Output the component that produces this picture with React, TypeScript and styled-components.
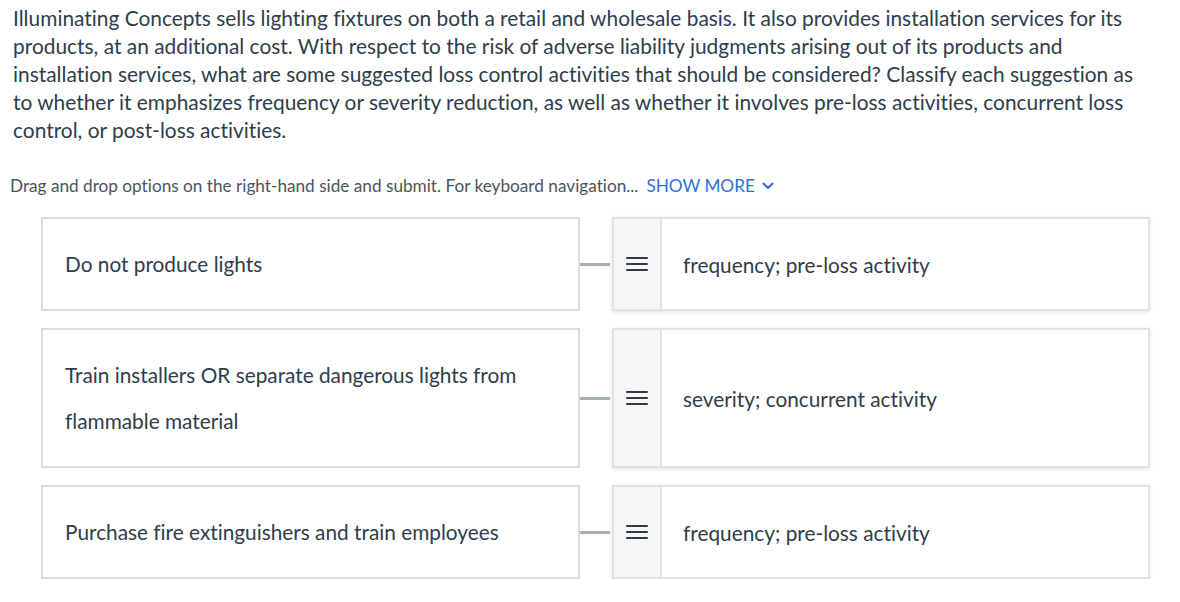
import React from "react";
import styled, { createGlobalStyle } from "styled-components";

const Global = createGlobalStyle`
  html, body { margin: 0; padding: 0; background: #fff; }
  body {
    font-family: Lato, "Open Sans", sans-serif;
    color: #2f3d4b;
    font-variant-ligatures: none;
  }
`;

const Page = styled.div`
  padding: 4px 0 0 13px;
  width: 1180px;
  box-sizing: border-box;
`;

const Question = styled.p`
  margin: 0;
  width: 1135px;
  font-size: 20.9px;
  line-height: 28px;
  color: #2f3d4b;
`;

const Hint = styled.div`
  margin: 32px 0 0 -3px;
  font-size: 17.2px;
  line-height: 20px;
  color: #4a545c;
  display: flex;
  align-items: center;
`;

const ShowMore = styled.span`
  margin-left: 8px;
  color: #2f6fd6;
  display: inline-flex;
  align-items: center;
  gap: 7px;
`;

const Rows = styled.div`
  margin: 21px 0 0 28px;
  display: flex;
  flex-direction: column;
  gap: 17px;
  width: 1109px;
`;

const Row = styled.div`
  display: flex;
  align-items: stretch;
`;

const LeftBox = styled.div`
  width: 539px;
  box-sizing: border-box;
  border: 2px solid #d7dde2;
  padding: 22px 22px 22px;
  font-size: 20.8px;
  line-height: 46px;
  display: flex;
  align-items: center;
`;

const Connector = styled.div`
  width: 32px;
  display: flex;
  align-items: center;
  &::before {
    content: "";
    display: block;
    width: 30px;
    height: 3px;
    background: #a8afb5;
  }
`;

const Card = styled.div`
  flex: 1;
  display: flex;
  border: 2px solid #e0e2e6;
  box-shadow: 0 1px 4px rgba(0, 0, 0, 0.12);
  background: #fff;
`;

const Handle = styled.div`
  width: 46px;
  background: #f6f6f7;
  border-right: 2px solid #e0e2e6;
  display: flex;
  align-items: center;
  justify-content: center;
  flex-shrink: 0;
`;

const CardText = styled.div`
  padding-left: 21px;
  font-size: 20.8px;
  display: flex;
  align-items: center;
`;

const Burger = () => (
  <svg width="22" height="14" viewBox="0 0 22 14">
    <g stroke="#2e3a44" strokeWidth="2" strokeLinecap="round">
      <line x1="1" y1="1" x2="21" y2="1" />
      <line x1="1" y1="7" x2="21" y2="7" />
      <line x1="1" y1="13" x2="21" y2="13" />
    </g>
  </svg>
);

const Chevron = () => (
  <svg width="12" height="8" viewBox="0 0 12 8">
    <path d="M1.5 1.5 L6 6 L10.5 1.5" fill="none" stroke="#2f6fd6" strokeWidth="2" strokeLinecap="round" strokeLinejoin="round" />
  </svg>
);

const rows = [
  { left: "Do not produce lights", right: "frequency; pre-loss activity" },
  { left: "Train installers OR separate dangerous lights from flammable material", right: "severity; concurrent activity" },
  { left: "Purchase fire extinguishers and train employees", right: "frequency; pre-loss activity" },
];

export default function App() {
  return (
    <Page>
      <Global />
      <Question>
        Illuminating Concepts sells lighting fixtures on both a retail and wholesale basis. It also provides installation services for its products, at an additional cost. With respect to the risk of adverse liability judgments arising out of its products and installation services, what are some suggested loss control activities that should be considered? Classify each suggestion as to whether it emphasizes frequency or severity reduction, as well as whether it involves pre-loss activities, concurrent loss control, or post-loss activities.
      </Question>
      <Hint>
        Drag and drop options on the right-hand side and submit. For keyboard navigation...
        <ShowMore>
          SHOW MORE <Chevron />
        </ShowMore>
      </Hint>
      <Rows>
        {rows.map((r, i) => (
          <Row key={i}>
            <LeftBox>{r.left}</LeftBox>
            <Connector />
            <Card>
              <Handle>
                <Burger />
              </Handle>
              <CardText>{r.right}</CardText>
            </Card>
          </Row>
        ))}
      </Rows>
    </Page>
  );
}
